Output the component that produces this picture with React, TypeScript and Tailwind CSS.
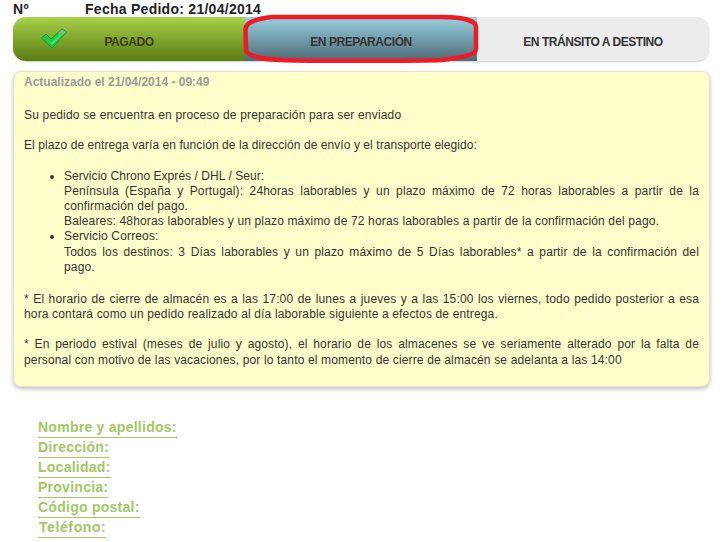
export default function App() {
  const fields = ["Nombre y apellidos:", "Dirección:", "Localidad:", "Provincia:", "Código postal:", "Teléfono:"];

  return (
    <div className="h-[542px] w-[724px] overflow-hidden bg-white font-['Liberation_Sans',Arial,sans-serif] text-[#333]">
      {/* Order header */}
      <div className="flex h-[17px] items-end pl-[13px] text-sm leading-[15px] font-bold tracking-[0.27px] text-[#222]">
        <span className="w-[72px]">Nº</span>
        <span>Fecha Pedido: 21/04/2014</span>
      </div>

      {/* Status tracker */}
      <div className="relative mx-[13px] flex h-[44px] w-[696px] rounded-[13px] bg-[#ececec] text-xs font-bold tracking-[-0.45px] text-[#333] shadow-[0_1px_2px_rgba(0,0,0,0.2)]">
        <div className="relative flex w-[232px] items-center justify-center rounded-l-[13px] bg-gradient-to-b from-[#a8d24a] to-[#5b7c10] pt-[5px]">
          <svg className="absolute top-[11px] left-[28px]" width="26" height="22" viewBox="0 0 26 22">
            <path d="M0.5 10 L5 6 L10 11 L21 1 L25.5 4 L11 20 Z" fill="#1fc840" stroke="#179a34" strokeWidth="1" />
            <path d="M4 9 L10 15 L22 3 L23.5 4.5 L11 17 Z" fill="#45e468" />
            <path d="M17 5 L21 1.5 L25 4 L21 8 Z" fill="#7cbf74" />
          </svg>
          <span className="text-[#3c3c22]">PAGADO</span>
        </div>
        <div className="flex w-[232px] items-center justify-center bg-gradient-to-b from-[#99d2e4] to-[#4f6b75] pt-[5px]">
          <span>EN PREPARACIÓN</span>
        </div>
        <div className="flex flex-1 items-center justify-center pt-[5px]">
          <span>EN TRÁNSITO A DESTINO</span>
        </div>
        {/* hand drawn highlight */}
        <svg className="absolute top-[-4px] left-[229px]" width="240" height="52" viewBox="0 0 240 52" fill="none">
          <path d="M30 4 L200 4 C222 4 234 8 234 14 L234 36 C234 42 222 44 200 47 C170 48 90 48 55 47.5 C25 47 8 45 4 38 L3.5 16 C4 9 14 6 30 4 Z" stroke="#ed1c24" strokeWidth="4.5" />
        </svg>
      </div>

      {/* Status panel */}
      <div className="mx-[13px] mt-[10px] h-[316px] w-[697px] rounded-[8px] border border-[#e3e3d0] bg-[#ffffcc] px-[10px] pt-[3px] text-xs leading-[15.2px] tracking-[0.15px] text-[#333] shadow-[0_2px_4px_rgba(0,0,0,0.25)]">
        <p className="font-bold tracking-normal text-[#999]">Actualizado el 21/04/2014 - 09:49</p>
        <p className="mt-[18px] tracking-[0.18px]">Su pedido se encuentra en proceso de preparación para ser enviado</p>
        <p className="mt-[15px] tracking-[0.07px]">El plazo de entrega varía en función de la dirección de envío y el transporte elegido:</p>
        <ul className="mt-[15px] list-disc pl-[40px] text-justify">
          <li>
            <span className="tracking-[0.05px]">Servicio Chrono Exprés / DHL / Seur:</span>
            <br />
            Península (España y Portugal): 24horas laborables y un plazo máximo de 72 horas laborables a partir de la confirmación del pago.
            <br />
            Baleares: 48horas laborables y un plazo máximo de 72 horas laborables a partir de la confirmación del pago.
          </li>
          <li>
            Servicio Correos:
            <br />
            <span className="block [text-align-last:justify]">
              Todos los destinos: 3 Días laborables y un plazo máximo de 5 Días laborables* a partir de la confirmación del
            </span>
            pago.
          </li>
        </ul>
        <p className="mt-[17px] text-justify">
          * El horario de cierre de almacén es a las 17:00 de lunes a jueves y a las 15:00 los viernes, todo pedido posterior a esa hora contará como un pedido realizado al día laborable siguiente a efectos de entrega.
        </p>
        <p className="mt-[15px] text-justify">
          * En periodo estival (meses de julio y agosto), el horario de los almacenes se ve seriamente alterado por la falta de personal con motivo de las vacaciones, por lo tanto el momento de cierre de almacén se adelanta a las 14:00
        </p>
      </div>

      {/* Delivery address */}
      <div className="mt-[31px] flex flex-col items-start pl-[38px] text-sm font-bold tracking-[0.26px] text-[#a2c864]">
        {fields.map((f) => (
          <span key={f} className="h-[20px] border-b border-[#a2c864] leading-[19px] last:pl-px last:tracking-[0.6px]">
            {f}
          </span>
        ))}
      </div>
    </div>
  );
}
